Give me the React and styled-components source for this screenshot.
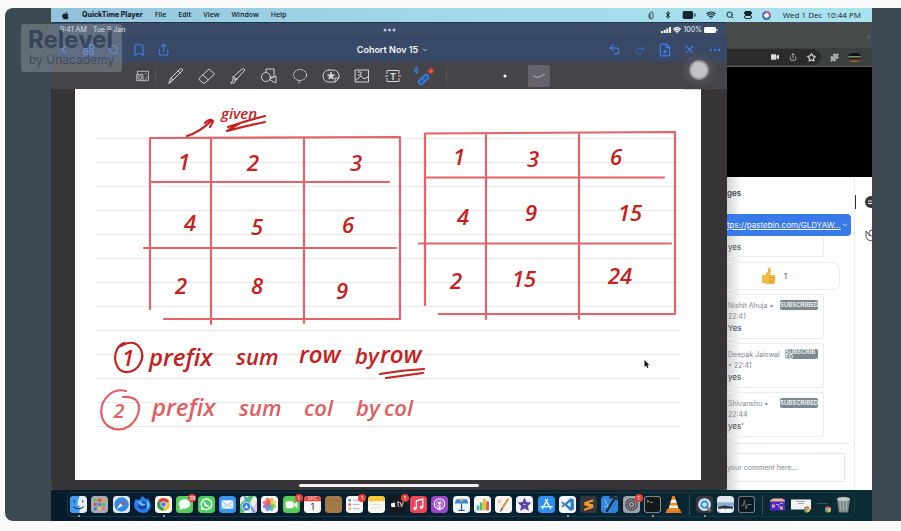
import React from "react";
import styled, { createGlobalStyle } from "styled-components";
import {
  Search, Wifi, Bluetooth, BatteryFull, Bookmark, Share, Undo2, Redo2,
  FilePlus, Ellipsis, ChevronLeft, ChevronDown, LayoutGrid, Star, Puzzle, X, ChevronRight,
} from "lucide-react";
import { FaApple, FaVideo } from "react-icons/fa";

const Global = createGlobalStyle`
  * { box-sizing: border-box; }
  body { margin: 0; background: #fafafb; font-family: Inter, "Liberation Sans", sans-serif; }
  button { font: inherit; color: inherit; background: none; border: 0; padding: 0; cursor: pointer; }
  svg { display: block; flex: none; }
`;

const Stage = styled.main`
  position: relative;
  margin: 8px 0 9px 5px;
  padding: 0 29px 0 46px;
  background: #3d4952;
  border-radius: 8px 0 0 8px;
`;
const Screen = styled.div`
  background: #0a2230;
`;

/* ---------- system menu bar ---------- */
const MenuBar = styled.header`
  display: flex;
  align-items: center;
  justify-content: space-between;
  height: 14px;
  padding: 0 11px 0 10px;
  background: linear-gradient(90deg, #93c3dc, #a2dae8 50%, #a9e3ee);
  color: #16242d;
  font-size: 7px;
  line-height: 14px;
`;
const MenuGroup = styled.nav`
  display: flex;
  align-items: center;
  gap: 12px;
  white-space: nowrap;
`;
const MenuItem = styled.button`
  font-family: ${(p) => (p.$strong ? "Inter" : '"Open Sans"')}, sans-serif;
  font-size: ${(p) => (p.$strong ? 7 : 7)}px;
  font-weight: ${(p) => (p.$strong ? 800 : 600)};
`;
const TrayGroup = styled.div`
  display: flex;
  align-items: center;
  gap: 10px;
  white-space: nowrap;
`;
const Clock = styled.time`
  padding-left: 2px;
  font-family: "Open Sans", sans-serif;
  font-size: 8px;
  font-weight: 500;
  white-space: pre;
`;

/* ---------- tablet window ---------- */
const Workspace = styled.div`
  display: flex;
  background: #454948;
`;
const Tablet = styled.section`
  position: relative;
  z-index: 1;
  flex: 676 1 0;
  min-width: 0;
  background: #363437;
  border-radius: 5px 5px 6px 6px;
  border-top: 1px solid #22344a;
  overflow: hidden;
`;
const StatusBar = styled.div`
  display: grid;
  grid-template-columns: 1fr auto 1fr;
  align-items: center;
  height: 14px;
  padding: 0 9px;
  background: #3b4c67;
  color: #eef2f7;
  font-size: 7px;
  line-height: 14px;
`;
const StatusSide = styled.div`
  display: flex;
  align-items: center;
  gap: ${(p) => (p.$end ? 2 : 6)}px;
  justify-content: ${(p) => (p.$end ? "flex-end" : "flex-start")};
`;
const NavBar = styled.div`
  display: grid;
  grid-template-columns: 1fr auto 1fr;
  align-items: center;
  height: 25px;
  background: #384967;
  color: #3f7ff0;
`;
const NavSide = styled.div`
  display: flex;
  justify-content: ${(p) => (p.$end ? "flex-end" : "flex-start")};
`;
const NavButton = styled.button`
  display: grid;
  place-items: center;
  width: 25px;
  height: 24px;
  opacity: ${(p) => (p.$dim ? 0.5 : 1)};
`;
const DocTitle = styled.button`
  display: flex;
  align-items: center;
  gap: 4px;
  padding-left: 7px;
  color: #f3f6fa;
  font-size: 9px;
  font-weight: 600;
`;
const ToolBar = styled.div`
  display: flex;
  align-items: center;
  height: 27px;
  padding-left: 79px;
  background: #454448;
  color: #d2d2d5;
`;
const Tool = styled.button`
  display: grid;
  place-items: center;
  width: ${(p) => (p.$narrow ? 25 : 31)}px;
  height: 22px;
`;
const ToolRule = styled.span`
  width: 1px;
  height: 20px;
  margin-left: ${(p) => p.$before || 0}px;
  margin-right: ${(p) => p.$after}px;
  background: #56555a;
`;
const StrokeTool = styled(Tool)`
  width: 22px;
  margin-right: 12px;
  border-radius: 2px;
  background: ${(p) => (p.$on ? "#65626b" : "transparent")};
`;
const Paper = styled.div`
  margin: 0 26px 0 24px;
  background: #fefefe;
  svg { width: 100%; height: auto; }
`;
const HomeStrip = styled.div`
  display: grid;
  place-items: center;
  height: 10px;
  span { width: 180px; height: 3px; border-radius: 2px; background: #f2f2f3; }
`;
const TouchDot = styled.button`
  position: absolute;
  top: 27px;
  right: 6px;
  display: grid;
  place-items: center;
  width: 44px;
  height: 40px;
  border-radius: 9px;
  background: radial-gradient(#5b5960 20%, rgba(72, 70, 78, 0.25) 60%);
  span { width: 20px; height: 20px; border-radius: 50%; background: #c3c2c5; border: 2px solid #98979c; }
`;

/* ---------- browser window ---------- */
const Browser = styled.section`
  flex: 145 1 0;
  min-width: 0;
  display: flex;
  flex-direction: column;
  background: #fefefe;
  overflow: hidden;
`;
const TabStrip = styled.div`
  display: flex;
  justify-content: flex-end;
  align-items: flex-end;
  height: 26px;
  padding-bottom: 8px;
  background: #464a49;
  color: #a5a8a8;
`;
const AddressRow = styled.div`
  display: flex;
  align-items: center;
  gap: 9px;
  height: 19px;
  background: #3c3f3f;
  color: #b9bbbb;
  border-bottom: 1px solid #5b5d5d;
`;
const Address = styled.div`
  display: flex;
  align-items: center;
  justify-content: flex-end;
  gap: 10px;
  flex: 1;
  height: 16px;
  padding-right: 5px;
  border-radius: 0 8px 8px 0;
  background: #2a2b2b;
  color: #dcdddd;
`;
const Avatar = styled.span`
  width: 13px;
  height: 9px;
  margin-right: 11px;
  border-radius: 5px;
  background: linear-gradient(#111 30%, #8a9a86 40%, #1b1b1b 60%, #b56d3a);
`;
const Video = styled.div`
  height: 110px;
  background: #000;
`;
const ChatArea = styled.div`
  display: flex;
  flex: 1;
  background: linear-gradient(90deg, #d4d4d5, #fdfdfd 14px, #fefefe);
`;
const Chat = styled.div`
  display: flex;
  flex-direction: column;
  flex: 1;
  min-width: 0;
  border-right: 1px solid #ececef;
  color: #3c4248;
`;
const ChatHeading = styled.h2`
  margin: 0;
  padding: 10px 0 15px;
  font: 600 8px/12px Inter, sans-serif;
`;
const PinnedLink = styled.a`
  display: flex;
  align-items: center;
  justify-content: space-between;
  height: 22px;
  margin-right: 3px;
  padding: 0 5px 0 0;
  border-radius: 0 4px 4px 0;
  background: #3a79e8;
  color: #f4f8ff;
  font-size: 8px;
  white-space: nowrap;
  text-decoration: underline;
`;
const Card = styled.article`
  height: ${(p) => (p.$short ? 21 : 45)}px;
  margin: 0 30px ${(p) => (p.$short ? 5 : 4)}px 0;
  padding: ${(p) => (p.$short ? 4 : 5)}px 5px 0 1px;
  border: 1px solid #ececee;
  border-width: ${(p) => (p.$short ? "0 1px 1px 0" : "1px 1px 1px 0")};
  border-radius: 0 3px 3px 0;
  overflow: hidden;
`;
const CardTop = styled.div`
  display: flex;
  justify-content: space-between;
  align-items: flex-start;
  height: 21px;
  color: #868b90;
  font-size: 7px;
  line-height: 11px;
  white-space: nowrap;
`;
const Badge = styled.span`
  width: ${(p) => (p.$tight ? 33 : 38)}px;
  height: 10px;
  border-radius: 2px;
  background: #7d8990;
  color: #f4f6f7;
  font-size: 6px;
  font-weight: 600;
  line-height: ${(p) => (p.$tight ? 5 : 10)}px;
  text-align: ${(p) => (p.$tight ? "left" : "center")};
  white-space: ${(p) => (p.$tight ? "normal" : "nowrap")};
  word-break: break-all;
  overflow: hidden;
`;
const Message = styled.p`
  margin: 0;
  font-size: 8px;
  line-height: 14px;
`;
const Reaction = styled.button`
  display: flex;
  align-items: center;
  justify-content: center;
  gap: 8px;
  height: 28px;
  margin: 0 14px 4px 0;
  padding-right: 18px;
  border: 1px solid #ececee;
  border-left: 0;
  border-radius: 0 7px 7px 0;
  color: #555;
  font-size: 8px;
`;
const CommentBox = styled.input`
  height: 29px;
  margin: 9px 9px 0 0;
  padding: 0;
  min-width: 0;
  border: 1px solid #e6e6e8;
  border-left: 0;
  border-radius: 0 2px 2px 0;
  background: transparent;
  font: 7px Inter, sans-serif;
  &::placeholder { color: #85888c; opacity: 1; }
`;
const ListEnd = styled.div`
  height: 3px;
  margin-right: 5px;
  border-bottom: 1px solid #e4e4e6;
`;
const Rail = styled.aside`
  display: flex;
  flex-direction: column;
  gap: 20px;
  width: 17px;
  padding: 18px 0 0 10px;
  overflow: hidden;
`;
const RailTop = styled.div`
  display: flex;
  align-items: center;
  height: 14px;
  margin-left: -10px;
  &::before { content: ""; width: 1px; height: 14px; margin-right: 9px; background: #333; flex: none; }
`;

/* ---------- dock ---------- */
const DockArea = styled.footer`
  display: flex;
  height: 31px;
  padding: 2px 17px 4px 16px;
  background: linear-gradient(90deg, #071b2d, #08202f 55%, #0b2d35);
`;
const Dock = styled.div`
  display: flex;
  align-items: center;
  flex: 1;
  min-width: 0;
  padding: 0 3px 0 2px;
  border: 1px solid #1d3742;
  border-radius: 5px;
`;
const DockGroup = styled.div`
  display: flex;
  align-items: center;
  justify-content: space-between;
  flex: ${(p) => p.$share} 1 0;
  min-width: 0;
`;
const DockRule = styled.span`
  width: 1px;
  height: 20px;
  margin: 0 6px 0 7px;
  background: #34505a;
`;
const DockApp = styled.button`
  position: relative;
  width: ${(p) => p.$w || 17}px;
  height: 17px;
  > svg { width: 100%; height: 17px; }
  &::after {
    content: "";
    display: ${(p) => (p.$open ? "block" : "none")};
    position: absolute;
    left: 8px;
    bottom: -4px;
    width: 2px;
    height: 2px;
    border-radius: 50%;
    background: #aebcc4;
  }
`;
const Count = styled.span`
  position: absolute;
  top: -2px;
  right: -3px;
  width: 8px;
  height: 8px;
  border-radius: 50%;
  background: #e5413a;
  color: #fff;
  font-size: 5px;
  line-height: 8px;
  text-align: center;
`;

/* ---------- watermark ---------- */
const Watermark = styled.div`
  position: absolute;
  z-index: 2;
  top: 16px;
  left: 16px;
  width: 101px;
  height: 48px;
  padding: 4px 0 0 7px;
  border-radius: 3px;
  background: rgba(166, 174, 184, 0.36);
  color: rgba(47, 62, 84, 0.86);
  strong { display: block; font: 700 24px/24px Inter, sans-serif; }
  span { display: block; padding-left: 1px; font: 400 12px/15px Inter, sans-serif; color: rgba(47, 60, 75, 0.7); }
`;

/* ---------- note-taking tool drawings ---------- */
const Line = ({ children, s = 18, w = 1 }) => (
  <svg width={s} height={s} viewBox="0 0 18 18" fill="none" stroke="currentColor" strokeWidth={w} strokeLinecap="round" strokeLinejoin="round">{children}</svg>
);
const tools = [
  ["Pen", <Line><path d="M2 16l2-5L13 2q2-1 3 1L6 13zM4 11l2 2M2 16l3-2M11 4l3 2" /></Line>],
  ["Eraser", <Line><path d="M1.500 11L11 2l5.500 5L7 16H5L1.500 13zM5 8l5.500 5" /></Line>],
  ["Highlighter", <Line><path d="M2 16l2-3V10l9-8q2-1 3 1L8 12l-3 1M4 10l4 2M2 16h3l2-3" /></Line>],
  ["Shapes", <Line><circle cx="6" cy="10" r="4.500" /><path d="M6 5V2h8v8h-4M10 12l6-3v7l-6-3z" /></Line>],
  ["Lasso", <Line><ellipse cx="9" cy="8" rx="6.500" ry="5.500" strokeDasharray="2 1.500" /><path d="M7 13q3 1 1 3" /></Line>],
  ["Elements", <Line><path d="M6.500 3h5a5.500 6 0 0 1 5.500 6v2l-4 4H6.500a5.500 6 0 0 1 0-12zM13 15v-4h4" /><path d="M9 5.500l1 2.300 2.500.200-2 1.600.700 2.400L9 10.700 6.800 12l.700-2.400-2-1.600L8 7.800z" fill="currentColor" /></Line>],
  ["Image", <Line><path d="M2.500 3h13v12h-13zM3 13l5-4 3 3 4-2M5 5h3v3H5" /></Line>],
  ["Text", <svg width="18" height="18" viewBox="0 0 18 18" fill="none" stroke="currentColor"><path d="M3 7V3.500h12V7M3 11v3.500h12V11M1 9h3M14 9h3" /><text x="9" y="12.500" textAnchor="middle" fontSize="9" fontWeight="700" fill="currentColor" stroke="none">T</text></svg>],
  ["Laser pointer", <svg width="22" height="20" viewBox="0 0 22 20"><path d="M8 16l5-5" stroke="#3977cf" strokeWidth="6.500" strokeLinecap="round" /><path d="M8 16l5-5" stroke="#1f4a92" strokeWidth="2" strokeLinecap="round" strokeDasharray="2 3" /><path d="M1 2l4 4-2 2V0l2 2-4 4" fill="none" stroke="#2f7de0" /><path d="M18 1.500v7M14.500 5h7M15.500 2.500l5 5M20.500 2.500l-5 5" stroke="#ef4339" strokeWidth=".800" /><circle cx="18" cy="5" r="2" fill="#ff4b3e" /></svg>],
];

/* ---------- notebook page ---------- */
const DEEP = "#c4211f";
const SOFT = "#df5f63";
const Ink = styled.text`
  fill: ${(p) => (p.$soft ? SOFT : DEEP)};
  font-family: "Open Sans", Lato, sans-serif;
  font-style: italic;
  font-weight: 600;
  font-size: ${(p) => p.$size || 22}px;
  text-anchor: ${(p) => (p.$start ? "start" : "middle")};
`;
const digits = [
  [184, 170, "1"], [253, 171, "2"], [356, 171, "3"],
  [190, 231, "4"], [257, 235, "5"], [348, 233, "6"],
  [181, 294, "2"], [257, 294, "8"], [342, 299, "9"],
  [459, 165, "1"], [533, 167, "3"], [616, 165, "6"],
  [463, 225, "4"], [531, 221, "9"], [630, 221, "15"],
  [456, 289, "2"], [524, 287, "15"], [620, 284, "24"],
];
const words = [
  [128, 366, "1", 0, 22], [149, 366, "prefix", 0, 24], [236, 365, "sum", 0, 22], [299, 363, "row", 0, 24],
  [355, 364, "by", 0, 22], [380, 363, "row", 0, 24],
  [119, 418, "2", 1, 20], [152, 416, "prefix", 1, 24], [239, 416, "sum", 1, 22], [304, 416, "col", 1, 22],
  [356, 416, "by", 1, 22], [384, 416, "col", 1, 22],
];
const rules = Array.from({ length: 13 }, (_, i) => 138 + i * 24);

const Notebook = () => (
  <svg viewBox="75 89 626 391" role="img" aria-label="Handwritten matrices">
    {rules.map((y) => <path key={y} d={`M97 ${y}.5H680`} stroke="#e6e7e8" strokeWidth="1" />)}
    <g fill="none" stroke="#e2636a" strokeWidth="2.200" strokeLinecap="round" strokeLinejoin="round">
      <path d="M150 309V138L400 137V319H164M211 138V324M304 138V323M150 182H389M144 248H396" />
      <path d="M425 305V133.500L675 132V314H439M486 133V319M579 133V319M425 177.500H664M419 243.500H671" />
    </g>
    <g fill="none" stroke={DEEP} strokeWidth="2.200" strokeLinecap="round" strokeLinejoin="round">
      <path d="M187 136Q200 132 211 121M205 123Q209 118 213 121Q212 124 210 127" />
      <path d="M265 116Q245 121 228 127M265 122Q246 126 227 131L240 123" />
      <path d="M124 343C112 347 112 370 125 372C139 373 146 357 140 348C136 342 129 341 121 346" />
      <path d="M380 374Q402 370 424 369M386 378L423 373" />
    </g>
    <path d="M126 391C111 387 98 402 102 417C107 434 131 434 138 414C142 401 134 396 123 397" fill="none" stroke={SOFT} strokeWidth="2.200" strokeLinecap="round" />
    <Ink x="239" y="119" $size={15}>given</Ink>
    {digits.map(([x, y, t]) => <Ink key={`${x}-${y}`} x={x} y={y}>{t}</Ink>)}
    {words.map(([x, y, t, soft, size]) => (
      <Ink key={`${x}-${y}`} x={x} y={y} $soft={!!soft} $size={size} $start={t.length > 1}>{t}</Ink>
    ))}
    <path d="M644.500 360v7l1.500-1.500 1.300 2.500 1.200-.700-1.200-2.300h2z" fill="#111" />
  </svg>
);

/* ---------- dock icons, drawn on a 16 unit tile ---------- */
const Tile = ({ bg, children }) => (
  <svg viewBox="0 0 16 16"><rect width="16" height="16" rx="3.500" fill={bg} />{children}</svg>
);
const ChromeMark = ({ x = 8, y = 8, r = 6 }) => (
  <g transform={`translate(${x} ${y}) scale(${r / 6})`}>
    <circle r="6" fill="#f4c430" />
    <path d="M0 0L-5.200-3A6 6 0 0 1 5.200-3z" fill="#dc4437" />
    <path d="M0 0L-5.200-3A6 6 0 0 0 0 6z" fill="#3a9d55" />
    <circle r="2.800" fill="#fff" /><circle r="2.200" fill="#3f7de8" />
  </g>
);
const apps = [
  ["Finder", <Tile bg="#e9eef3"><path d="M3.500 0H9Q7 4 7 9h2v7H3.500A3.500 3.500 0 0 1 0 12.500v-9A3.500 3.500 0 0 1 3.500 0z" fill="#3e9df0" /><path d="M4 4v2M12 4v2M3 10q5 4 10 0" stroke="#1d3556" fill="none" /></Tile>, null, true],
  ["Launchpad", <Tile bg="#a9acb2">{["#6cc04a", "#e74c3c", "#f39c3b", "#e14b4b", "#3d8bea", "#57bd55", "#4a78dd", "#f0c33d", "#eb6ba7"].map((c, i) => <rect key={i} x={2.500 + (i % 3) * 4} y={2.500 + Math.floor(i / 3) * 4} width="3" height="3" rx=".700" fill={c} />)}</Tile>],
  ["Safari", <Tile bg="#dfe7ee"><circle cx="8" cy="8" r="6.800" fill="#2f8be6" /><path d="M12.500 3.500L9 9 7 7z" fill="#ee4a3c" /><path d="M3.500 12.500L9 9 7 7z" fill="#fff" /></Tile>],
  ["Firefox", <svg viewBox="0 0 16 16"><path d="M8 0q1 2 4 3l1-1q3 4 3 7-1 7-8 7-7-1-8-7Q0 5 2 2l1 2q2-1 3-.500Q6 1 8 0z" fill="#2b7de9" /><circle cx="8" cy="9" r="3.800" fill="#1d3e9c" /><path d="M3 5q4-1 5 2l3 .500q-1 2-3 2-2 0-3-2z" fill="#5cc0fa" /><path d="M12 4q3 3 2 6l-2 2q1-4 0-8z" fill="#6fd0fb" /></svg>],
  ["Chrome", <Tile bg="#f5f6f6"><ChromeMark /></Tile>, null, true],
  ["Messages", <Tile bg="#56cc5b"><ellipse cx="8" cy="7.500" rx="5.500" ry="4.500" fill="#f5fff5" /><path d="M4 10l-1 3 4-1z" fill="#f5fff5" /></Tile>, "28"],
  ["WhatsApp", <Tile bg="#48cf60"><circle cx="8" cy="7.800" r="5" fill="none" stroke="#fff" strokeWidth="1.300" /><path d="M3.500 10L2.500 13.500l3.500-1z" fill="#fff" /><path d="M6 5.500q0 4 4.500 4.500" stroke="#fff" strokeWidth="1.600" fill="none" /></Tile>],
  ["Mail", <Tile bg="#3b94ee"><rect x="2.500" y="4" width="11" height="8" rx="1" fill="#eef6ff" /><path d="M3 5l5 4 5-4M3 11.500l3.500-3M13 11.500l-3.500-3" stroke="#7fa9d6" strokeWidth=".800" fill="none" /></Tile>],
  ["Maps", <Tile bg="#e9efe6"><path d="M0 8l8-8h5L3 16H0z" fill="#58c26b" /><path d="M9 16L16 5v8q0 3-3 3z" fill="#eec1e0" /><path d="M4 0l10 16" stroke="#5b9bea" strokeWidth="2" /><circle cx="6" cy="10" r="4" fill="#2a78e8" stroke="#fff" strokeWidth=".700" /><path d="M6 7.500l2 4.500-2-1-2 1z" fill="#fff" /></Tile>],
  ["Photos", <Tile bg="#f7f7f6">{["#f0a33a", "#ead34a", "#8cc652", "#4fb7a5", "#5590dc", "#9a6cc8", "#de5f9b", "#ec5b45"].map((c, i) => <ellipse key={c} cx="8" cy="4.500" rx="2" ry="3.200" fill={c} opacity=".850" transform={`rotate(${i * 45 + 22} 8 8)`} />)}</Tile>],
  ["FaceTime", <Tile bg="#55cb5a"><rect x="2.500" y="5" width="7.500" height="6.500" rx="1.500" fill="#fff" /><path d="M10.500 7.500l3-2v6l-3-2z" fill="#fff" /></Tile>, "1"],
  ["Calendar", <Tile bg="#f8f8f8"><path d="M0 5V3.500A3.500 3.500 0 0 1 3.500 0h9A3.500 3.500 0 0 1 16 3.500V5z" fill="#e6463d" /><text x="8" y="4" fontSize="4" fill="#fff" textAnchor="middle">DEC</text><text x="8" y="13.500" fontSize="9" fill="#333" textAnchor="middle">1</text></Tile>],
  ["Folder", <Tile bg="#a4794a"><path d="M1 4h14M6 9h4" stroke="#946b3e" /></Tile>],
  ["Reminders", <Tile bg="#f7f7f7"><path d="M6.500 4H13M6.500 8H13M6.500 12H13" stroke="#b9bbbd" /><circle cx="3.500" cy="4" r="1.200" fill="#3f83e6" /><circle cx="3.500" cy="8" r="1.200" fill="#e9503f" /><circle cx="3.500" cy="12" r="1.200" fill="#f1a13a" /></Tile>, "1"],
  ["Notes", <Tile bg="#f8f7f2"><path d="M0 5V3.500A3.500 3.500 0 0 1 3.500 0h9A3.500 3.500 0 0 1 16 3.500V5z" fill="#f6c937" /><path d="M3 8h10M3 11h10" stroke="#dcd9cf" strokeWidth=".700" /></Tile>],
  ["TV", <Tile bg="#17191c"><FaApple x="1" y="5" size="6" color="#fff" /><text x="7.500" y="10.500" fontSize="7" fill="#fff">tv</text></Tile>, "1"],
  ["Music", <Tile bg="#f0435a"><path d="M6 11.500V4.500l6-1.500v7.500" stroke="#fff" strokeWidth="1.200" fill="none" /><circle cx="4.800" cy="11.700" r="1.500" fill="#fff" /><circle cx="10.800" cy="10.700" r="1.500" fill="#fff" /></Tile>],
  ["Podcasts", <Tile bg="#9b45c9"><circle cx="8" cy="7.500" r="5" fill="none" stroke="#fff" /><circle cx="8" cy="7.500" r="2.800" fill="none" stroke="#e9cff5" strokeWidth=".800" /><circle cx="8" cy="7" r="1.300" fill="#fff" /><path d="M8 9v4.500" stroke="#fff" strokeWidth="1.800" /></Tile>],
  ["Keynote", <Tile bg="#f2f5f8"><path d="M3 3h10l1.500 4h-13z" fill="#3d8ada" /><path d="M8 7v6M5 13.500h6" stroke="#3d5f88" strokeWidth="1.200" /><path d="M7 2h2v3H7z" fill="#f0c04a" /></Tile>],
  ["Numbers", <Tile bg="#f5f6f4"><path d="M2.500 9h2.500v4.500H2.500z" fill="#3db6d5" /><path d="M5.500 6H8v7.500H5.500z" fill="#56bf4f" /><path d="M8.500 2.500H11v11H8.500z" fill="#f0b735" /><path d="M11.500 5H14v8.500h-2.500z" fill="#e4513f" /></Tile>],
  ["Pages", <Tile bg="#f7f6f3"><path d="M12.500 2.500L6 13" stroke="#e39537" strokeWidth="2" /><path d="M6.500 12L5 14.500" stroke="#444" /><path d="M2.500 4h4M2.500 6h3" stroke="#e4b88a" /></Tile>],
  ["iMovie", <Tile bg="#f3f1f7"><path d="M8 1.500l2 4.200 4.500.500-3.300 3.200.900 4.600L8 11.800 3.900 14l.900-4.600L1.500 6.200 6 5.700z" fill="#5d46a8" /><path d="M6.500 8h3" stroke="#b6a6e4" /></Tile>],
  ["App Store", <Tile bg="#2f8ff0"><path d="M8.800 3.500L4 12M7.200 3.500L12 12M2.800 10h10.400" stroke="#fff" strokeWidth="1.300" strokeLinecap="round" /></Tile>],
  ["VS Code", <Tile bg="#f3f6f8"><path d="M10.800 2l3.200 1.400v9.200L10.800 14 5.500 9 3.300 10.800 2 10l2.200-2L2 6l1.300-.800L5.500 7zM10.800 5.500L7.600 8l3.200 2.500z" fill="#2f7fc4" fillRule="evenodd" /></Tile>, null, true],
  ["Sublime Text", <Tile bg="#33363a"><path d="M12.500 3L4 5.800v3l5 1.400L4 12v2l8.500-3V8L7.500 6.700l5-1.600z" fill="#f59a2f" /></Tile>],
  ["Xcode", <Tile bg="#2e85dd"><path d="M3 3l5 9M2.500 10h7" stroke="#8ccaff" strokeWidth=".800" /><path d="M5 15L12.500 3" stroke="#20262d" strokeWidth="2" /><path d="M8 1.500q4-1.500 7.500 2" stroke="#20262d" strokeWidth="2.200" fill="none" /></Tile>],
  ["Settings", <Tile bg="#9fa2a5"><circle cx="8" cy="8" r="6" fill="#4b4e52" /><circle cx="8" cy="8" r="4.200" fill="none" stroke="#b6b9bb" strokeDasharray="1 .700" /><circle cx="8" cy="8" r="1.800" fill="none" stroke="#c5c7c9" /></Tile>, "1"],
  ["Terminal", <Tile bg="#a2a5a7"><rect x=".800" y=".800" width="14.400" height="14.400" rx="3" fill="#15181b" /><path d="M3 4l1.500 1L3 6M6 6h2" stroke="#d8dadb" strokeWidth=".800" fill="none" /></Tile>, null, true],
  ["VLC", <svg viewBox="0 0 16 16"><path d="M2 12h12l1.500 4H.500z" fill="#e8791c" /><path d="M7 0h2l4 13q-5 2-10 0z" fill="#f08a24" /><path d="M6 3.500h4l1 3H5zM4.200 9h7.600l.700 2.200H3.500z" fill="#f4f4f2" /></svg>],
];
const recents = [
  ["QuickTime Player", <Tile bg="#34383f"><circle cx="8" cy="8" r="6" fill="#dfe4ea" /><circle cx="8" cy="8" r="4" fill="#3b9be4" /><circle cx="8" cy="8" r="2" fill="#c9e7fb" /><path d="M9.500 10l4 4" stroke="#7c848d" strokeWidth="2" /></Tile>, null, true],
  ["Preview", <Tile bg="#e1e8f0"><path d="M0 6h16v4H0z" fill="#8badd5" /><path d="M1 10l6-1 8 1v2H1z" fill="#28333f" /><path d="M4 12h3v3H4zM9 12h4v3H9z" fill="#fff" /></Tile>],
  ["Activity Monitor", <Tile bg="#87959b"><rect x=".800" y=".800" width="14.400" height="14.400" rx="3" fill="#0f1a1e" /><path d="M3 9h2l1-5 1.500 8L9 8h4" stroke="#7d9899" strokeWidth=".700" fill="none" /></Tile>],
];
const shelf = [
  ["Pictures", <svg viewBox="0 0 18 16"><path d="M1 4l7-2h8v12H1z" fill="#4b2bd0" /><path d="M1 4l3-2h9l3 2v1H1z" fill="#e8b58e" /><path d="M3 8h3v3H3zM11 10h3v3h-3z" fill="#f0a06a" /><path d="M7 8h3v3M11 7h3" stroke="#b9a2ff" fill="none" /></svg>, null, false, 18],
  ["Window one", <svg viewBox="0 0 20 16"><path d="M0 3h20v10H0z" fill="#f0f2f3" /><path d="M5 5h9M7 7h6" stroke="#a0a7ab" /><ChromeMark x={16} y={13} r={3} /></svg>, null, false, 20],
  ["Window two", <svg viewBox="0 0 16 16"><path d="M1 7h11" stroke="#3a5660" /><ChromeMark x={12} y={13} r={3} /></svg>, null, false, 16],
  ["Bin", <svg viewBox="0 0 15 16"><path d="M1 2h13l-2 14H3z" fill="#7f8a8b" /><path d="M4 4l1 10M7.500 4v10M11 4l-1 10" stroke="#a4aeae" /><ellipse cx="7.500" cy="2.500" rx="6.500" ry="2" fill="#c2c9c9" /></svg>, null, false, 15],
];
const DockItems = ({ items }) => items.map(([name, icon, count, open, w]) => (
  <DockApp key={name} aria-label={name} $open={open} $w={w}>{icon}{count && <Count>{count}</Count>}</DockApp>
));

const comments = [
  { name: "Nishit Ahuja •", time: "22:41", text: "Yes" },
  { name: "Deepak Jaiswal", time: "• 22:41", text: "yes", tight: true },
  { name: "Shivanshu •", time: "22:44", text: "yes’" },
];

export default function App() {
  return (
    <>
      <Global />
      <Stage>
        <Screen>
          <MenuBar>
            <MenuGroup>
              <FaApple size={9} />
              {["QuickTime Player", "File", "Edit", "View", "Window", "Help"].map((t, i) => (
                <MenuItem key={t} $strong={i === 0}>{t}</MenuItem>
              ))}
            </MenuGroup>
            <TrayGroup>
              <svg width="6" height="9" viewBox="0 0 6 9" fill="none" stroke="currentColor" strokeWidth=".800"><path d="M1 3v3q0 2 2 2t2-2V2.500Q5 1 3.500 1T2 2.500V6q0 .800 1 .800" /></svg>
              <Bluetooth size={8} strokeWidth={3} />
              <BatteryFull size={14} fill="#16242d" /><Wifi size={10} strokeWidth={3} /><Search size={8} strokeWidth={3} />
              <svg width="8" height="8" viewBox="0 0 8 8" fill="none" stroke="currentColor"><rect x=".500" y=".500" width="7" height="3" rx="1.500" fill="#16242d" /><rect x=".500" y="4.500" width="7" height="3" rx="1.500" /></svg>
              <svg width="9" height="9" viewBox="0 0 9 9" fill="none" strokeWidth="2"><path d="M4.500 1a3.500 3.500 0 0 1 3.500 3.500" stroke="#e04f6d" /><path d="M8 4.500a3.500 3.500 0 0 1-7 0" stroke="#34709c" /><path d="M1 4.500A3.500 3.500 0 0 1 4.500 1" stroke="#8b4fb5" /><circle cx="4.500" cy="4.500" r="2" fill="#f4fbff" /></svg>
              <Clock>{"Wed 1 Dec  10:44 PM"}</Clock>
            </TrayGroup>
          </MenuBar>

          <Workspace>
            <Tablet>
              <StatusBar>
                <StatusSide><span>9:41 AM</span><span>Tue 9 Jan</span></StatusSide>
                <svg width="13" height="4" viewBox="0 0 13 4" fill="#b9c8df"><circle cx="2" cy="2" r="1.500" /><circle cx="6.500" cy="2" r="1.500" /><circle cx="11" cy="2" r="1.500" /></svg>
                <StatusSide $end>
                  <svg width="10" height="6" viewBox="0 0 10 6" fill="#fff"><path d="M0 4h2v2H0zM2.700 3h2v3h-2zM5.300 1.500h2V6h-2zM8 0h2v6H8z" /></svg>
                  <Wifi size={8} strokeWidth={4} /><span>100%</span>
                  <svg width="14" height="6" viewBox="0 0 14 6" fill="#fff"><rect width="12" height="6" rx="1.500" /><path d="M13 2v2" stroke="#fff" /></svg>
                </StatusSide>
              </StatusBar>
              <NavBar>
                <NavSide>
                  <NavButton aria-label="Back"><ChevronLeft size={13} /></NavButton>
                  <NavButton aria-label="Pages"><LayoutGrid size={13} /></NavButton>
                  <NavButton aria-label="Search"><Search size={12} /></NavButton>
                  <NavButton aria-label="Bookmark"><Bookmark size={14} /></NavButton>
                  <NavButton aria-label="Share"><Share size={13} /></NavButton>
                </NavSide>
                <DocTitle>Cohort Nov 15 <ChevronDown size={6} strokeWidth={3} /></DocTitle>
                <NavSide $end>
                  <NavButton aria-label="Undo"><Undo2 size={13} /></NavButton>
                  <NavButton aria-label="Redo" $dim><Redo2 size={12} /></NavButton>
                  <NavButton aria-label="Add page"><FilePlus size={14} /></NavButton>
                  <NavButton aria-label="Pen mode"><X size={13} /></NavButton>
                  <NavButton aria-label="More"><Ellipsis size={14} /></NavButton>
                </NavSide>
              </NavBar>
              <ToolBar>
                <Tool $narrow aria-label="Zoom window"><Line s={14}><path d="M2 3h14v12H8M2 3v3M1 7h8v8H1zM3 9h4v4H3zM12 6h1M15 10l-3 4" /></Line></Tool>
                <ToolRule $after={4} />
                {tools.map(([name, icon]) => <Tool key={name} aria-label={name}>{icon}</Tool>)}
                <ToolRule $before={7} $after={47} />
                <StrokeTool aria-label="Fine stroke"><svg width="4" height="4" viewBox="0 0 4 4"><circle cx="2" cy="2" r="1.500" fill="#fff" /></svg></StrokeTool>
                <StrokeTool aria-label="Curved stroke" $on><Line s={14}><path d="M2 9q4 3 8 1t6-3" /></Line></StrokeTool>
              </ToolBar>
              <Paper><Notebook /></Paper>
              <HomeStrip><span /></HomeStrip>
              <TouchDot aria-label="Assistive touch"><span /></TouchDot>
            </Tablet>

            <Browser>
              <TabStrip><ChevronRight size={6} /></TabStrip>
              <AddressRow>
                <Address><FaVideo size={8} /><Share size={8} /><Star size={9} strokeWidth={3} /></Address>
                <Puzzle size={9} fill="#a9abab" />
                <Avatar />
              </AddressRow>
              <Video />
              <ChatArea>
                <Chat>
                  <ChatHeading>ges</ChatHeading>
                  <PinnedLink href="#pinned"><span>tps://pastebin.com/GLDYAW...</span><ChevronDown size={8} /></PinnedLink>
                  <Card $short><Message>yes</Message></Card>
                  <Reaction aria-label="Thumbs up, 1">
                    <svg width="15" height="18" viewBox="0 0 15 18"><path d="M1 8h3l3-4V1q3-1 3 3L9 8h5q1 2 0 5l-1 4H5l-1-1H1z" fill="#f4b942" /><path d="M8 10.500h6M8 13h6M8 15h5" stroke="#d9932b" strokeWidth=".800" /></svg>
                    1
                  </Reaction>
                  {comments.map((c) => (
                    <Card key={c.name}>
                      <CardTop><span>{c.name}<br />{c.time}</span><Badge $tight={c.tight}>SUBSCRIBED</Badge></CardTop>
                      <Message>{c.text}</Message>
                    </Card>
                  ))}
                  <ListEnd />
                  <CommentBox aria-label="Comment" placeholder="your comment here..." />
                </Chat>
                <Rail>
                  <RailTop><svg width="12" height="12" viewBox="0 0 12 12"><circle cx="6" cy="6" r="6" fill="#35393c" /><path d="M3 5h6M3 7.500h4" stroke="#fff" /></svg></RailTop>
                  <svg width="13" height="13" viewBox="0 0 13 13" fill="none" stroke="#555"><path d="M1 2v6q1 4 6 4h5V2M1 2l4 5" /><circle cx="7" cy="4" r="3" /></svg>
                </Rail>
              </ChatArea>
            </Browser>
          </Workspace>

          <DockArea>
            <Dock>
              <DockGroup $share={612}><DockItems items={apps} /></DockGroup>
              <DockRule />
              <DockGroup $share={59}><DockItems items={recents} /></DockGroup>
              <DockRule />
              <DockGroup $share={82}><DockItems items={shelf} /></DockGroup>
            </Dock>
          </DockArea>
        </Screen>
        <Watermark><strong>Relevel</strong><span>by Unacademy</span></Watermark>
      </Stage>
    </>
  );
}
